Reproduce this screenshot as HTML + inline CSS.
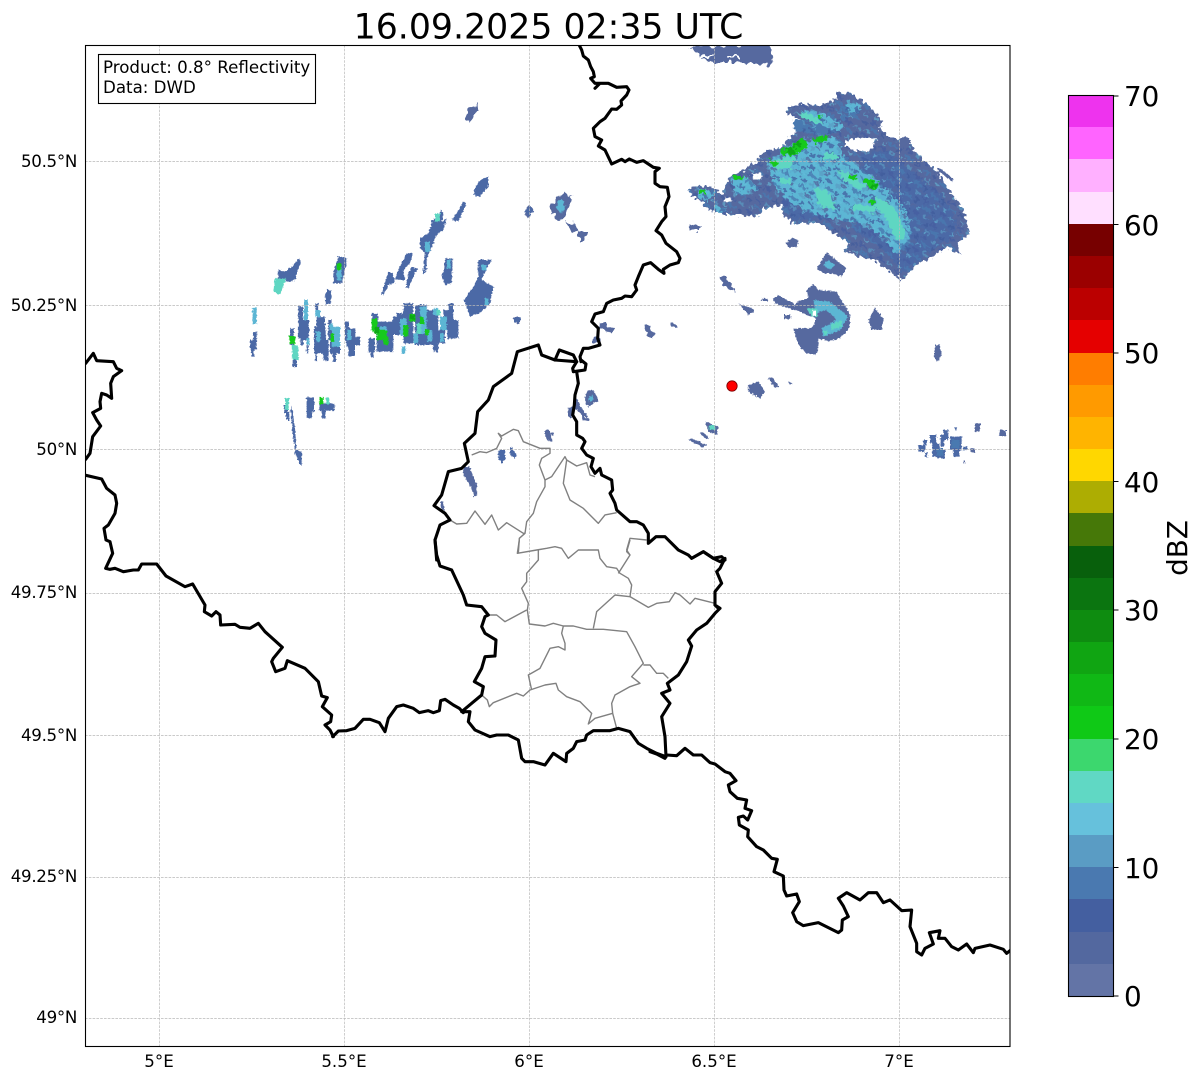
<!DOCTYPE html>
<html><head><meta charset="utf-8"><title>Radar</title>
<style>
html,body{margin:0;padding:0;background:#fff}
svg{display:block}
text{font-family:"DejaVu Sans",sans-serif;fill:#000}
.b{fill:none;stroke:#000;stroke-width:3.1;stroke-linejoin:round;stroke-linecap:round;vector-effect:non-scaling-stroke}
.g{fill:none;stroke:#808080;stroke-width:1.4;stroke-linejoin:round;vector-effect:non-scaling-stroke}
.gr{stroke:#b9b9b9;stroke-width:.7;stroke-dasharray:2.6 1.2;fill:none}
.t{font-size:16.67px}
.y{font-size:16.67px;letter-spacing:-.32px}
.c{font-size:27.78px}
.bl{fill:#4c69a6}.bm{fill:#4a79b0}.cy{fill:#5cb6d4}.te{fill:#5fd6c2}.gn{fill:#14c91c}.dg{fill:#0da815}.s{fill:#56699f}
</style></head>
<body>
<svg width="1202" height="1081" viewBox="0 0 1202 1081" xmlns="http://www.w3.org/2000/svg">
<defs>
<clipPath id="ax"><rect x="85.5" y="45.5" width="924.5" height="1001"/></clipPath>
<filter id="rough" x="-5%" y="-5%" width="110%" height="110%" primitiveUnits="userSpaceOnUse">
<feTurbulence type="fractalNoise" baseFrequency="0.11" numOctaves="1" seed="4" result="n"/>
<feDisplacementMap in="SourceGraphic" in2="n" scale="26" xChannelSelector="R" yChannelSelector="G"/>
</filter>
<filter id="rough2" x="-5%" y="-5%" width="110%" height="110%" primitiveUnits="userSpaceOnUse">
<feTurbulence type="fractalNoise" baseFrequency="0.18" numOctaves="1" seed="9" result="n"/>
<feDisplacementMap in="SourceGraphic" in2="n" scale="11" xChannelSelector="R" yChannelSelector="G"/>
</filter>
<pattern id="sp" width="66" height="44" patternUnits="userSpaceOnUse" patternTransform="rotate(38)">
<rect x="0" y="4" width="24" height="9" fill="#445fa0" opacity=".75"/>
<rect x="34" y="0" width="18" height="8" fill="#5a9cc4" opacity=".7"/>
<rect x="12" y="22" width="30" height="8" fill="#4a79b0" opacity=".8"/>
<rect x="48" y="18" width="14" height="10" fill="#3f5a9c" opacity=".7"/>
<rect x="2" y="34" width="12" height="7" fill="#66c1dc" opacity=".55"/>
<rect x="44" y="35" width="20" height="7" fill="#53689f" opacity=".8"/>
</pattern>
</defs>
<rect width="1202" height="1081" fill="#fff"/>

<g clip-path="url(#ax)">
<!-- radar: main storm -->
<g transform="translate(680 80) scale(.33333)">
<g filter="url(#rough)">
<path class="s" d="M20 328L60 318 100 322 125 345 130 325 150 290 190 270 230 245 240 225 260 212 300 205 320 180 350 155 375 140 355 115 320 100 325 80 360 72 420 75 450 65 470 55 465 35 510 40 550 65 590 100 605 125 600 150 630 170 690 195 725 235 770 275 815 340 845 380 870 460 830 490 840 525 800 500 760 530 720 545 695 570 665 600 630 575 585 540 530 530 490 510 510 490 470 465 420 430 340 430 305 400 310 375 250 385 235 410 160 405 120 400 70 380 70 370 35 345Z"/>
<path fill="#fff" d="M500 180L540 172 590 180 565 215 520 210 495 195ZM215 280h30v16h-30ZM135 352h20v14h-20Z"/>
<path class="bl" d="M540 220L620 210 700 280 780 340 830 420 820 470 740 520 670 580 600 500 520 450 560 380ZM300 340L400 350 440 420 340 420 310 380Z"/>
<path class="bm" d="M340 120h90l60 30 -60 20 -90 -20ZM470 90l50 -30 20 40 -50 20ZM620 450l40 -30 40 70 -40 30Z"/>
<path class="cy" d="M360 90L420 95 490 130 480 155 420 135 375 110ZM500 60l30 5 15 25 -40 10ZM60 325l45 15 -20 25 -35 -15ZM110 375l30 15 -15 10 -25 -10ZM150 300l45 -10 45 35 -40 15 -30 5Z"/>
<path class="cy" d="M260 250L340 190 470 170 490 225 590 300 680 390 695 460 650 525 610 470 540 430 480 420 400 400 350 380 290 330Z"/>
<path fill="url(#sp)" d="M20 328L60 318 100 322 125 345 130 325 150 290 190 270 230 245 240 225 260 212 300 205 320 180 350 155 375 140 355 115 320 100 325 80 360 72 420 75 450 65 470 55 465 35 510 40 550 65 590 100 605 125 600 150 630 170 690 195 725 235 770 275 815 340 845 380 870 460 830 490 840 525 800 500 760 530 720 545 695 570 665 600 630 575 585 540 530 530 490 510 510 490 470 465 420 430 340 430 305 400 310 375 250 385 235 410 160 405 120 400 70 380 70 370 35 345ZM500 180L495 195 520 210 565 215 590 180 540 172Z" fill-rule="evenodd"/>
<path class="te" d="M270 250l50 -20 30 0 -20 35 -40 5ZM470 270l30 5 60 45 -20 10 -50 -30ZM590 350l50 30 30 60 10 30 -30 10 -30 -60 -30 -40ZM400 320l40 10 30 60 -50 -10ZM520 370l60 10 20 -20 -20 40 -60 -10ZM300 295h30v20h-30ZM350 100h40l40 30 -40 -5ZM430 220h40v18h-40Z"/>
<path class="gn" d="M305 205h35v-15l30 -15 15 20 -25 20 -25 10h-30ZM265 235l30 15 -5 12 -25 -12ZM395 175l45 -10 5 15 -40 12ZM505 285l25 5 -5 12 -20 -8ZM550 295l25 0 25 25 -20 10 -25 -20ZM155 288h40l-10 10h-25ZM570 355l15 5 -5 15 -12 -8ZM415 105l15 5 -15 5ZM60 330h15v10h-15Z"/>
<path class="dg" d="M320 205h25v15h-25ZM345 185h20v15h-20ZM575 310h18v14h-18Z"/>
</g>
<g filter="url(#rough2)">
<path class="s" d="M316 490l20 -18 20 10 -6 18 -22 3ZM410 565l20 -30 10 -18 30 25 30 22 -15 25 -30 -8 -25 -2ZM28 436h18v12h-18ZM118 595l12 -8 30 40 -14 0ZM740 258l8 -2 8 10 -6 2ZM770 262l10 2 40 34 -4 6 -40 -30ZM658 178l20 -10 16 18 -18 20 -16 -14Z"/>
<path class="cy" d="M430 555l15 -15 20 15 -15 15Z"/>
</g>
</g>
<!-- radar: top and scattered north -->
<g filter="url(#rough2)">
<path class="s" d="M690 47L770 45 773 60 766 66 745 62 712 62 700 56ZM465 113l13 -9 1 6 -11 13ZM525 209l7 -3 2 7 -7 4ZM550 206l14 -14 9 4 -7 18 -6 6 -8 -6ZM565 222l6 0 7 8 -6 3ZM578 231l9 0 1 8 -8 1ZM691 225h9v6h-9ZM720 277l6 0 8 14 -8 -4Z"/>
<path fill="#fff" d="M700 55h12v2h-12ZM726 56h14v2h-14Z"/>
<path class="cy" d="M556 204l7 -6 3 8 -6 6Z"/>
<path class="s" d="M598 323l8 -1 3 3 -2 6 -7 -1ZM605 326l9 2 -1 5 -9 -2ZM593 337h8v6h-8ZM645 327l5 -2 6 10 -3 3 -5 -3ZM670 322l5 0 3 6 -5 1ZM585 392l7 -3 5 12 -6 5 -6 -3ZM568 408h6v8h-6ZM576 406l5 2 7 12 -4 1Z"/>
<path class="s" d="M513 317l6 1 1 4 -6 -1Z"/>
</g>
<!-- west clusters -->
<g transform="translate(240 170) scale(.33333)">
<g filter="url(#rough2)">
<path class="bl" d="M30 510h20v28h-20ZM34 538h9v22h-9ZM40 485h10v25h-10ZM150 475h12v50h-12ZM158 565h13v25h-13ZM175 410h14v95h-14ZM185 450h22v60h-22ZM182 505h8v20h-8ZM200 510h5v40h-5ZM222 470h35v80h-35ZM226 400h10v30h-10ZM230 440h25v40h-25ZM225 548h6v24h-6ZM250 510h15v62h-15ZM265 450h10v60h-10ZM258 520h8v52h-8ZM270 480h30v70h-30ZM278 545h10v30h-10ZM315 455h12v60h-12ZM318 475h28v55h-28ZM325 530h20v28h-20ZM345 500h15v25h-15ZM385 505h20v42h-20ZM392 545h9v18h-9ZM395 430h20v30h-20ZM410 455h50v90h-50ZM458 440h26v55h-26ZM490 400h30v120h-30ZM525 405h35v120h-35ZM555 420h40v105h-40ZM580 480h15v65h-15ZM595 480h20v40h-20ZM610 420h30v60h-30ZM622 450h33v55h-33ZM625 400h15v30h-15ZM470 430h30v50h-30Z"/>
<path class="bl" d="M178 265l4 10 -17 55 -20 5 -30 -5v-32l20 7 20 -15ZM295 258l27 7 -17 75 -25 0v-30ZM262 358l13 4 -3 38 -14 5 -3 -25ZM575 155l30 -35 5 10 -5 25 15 -10 -10 35 -20 15 -20 50 -10 20v35l-12 15 7 -65 -15 -15v-30l25 -15 10 -30ZM500 250l18 -2 -8 32 -20 20 5 30h-30l5 -20ZM445 305l13 5 7 30 -20 5 -15 30 -5 -5ZM515 292l20 3 -15 25 -15 35 -7 -5 7 -40ZM615 265l23 0 -3 75 -20 5 -10 -30 7 -10ZM715 270h40l-20 35 -10 25 35 20 -10 50 -25 25 -10 5 -25 10 -18 -50 28 -40 15 -30ZM705 55l15 -25 25 -10v30l-25 30 -20 -5ZM670 95l10 5 -25 55 -18 -5ZM868 108l14 14 -14 16 -15 -13ZM822 442h18v15h-18ZM155 705l10 70 5 65 15 5 2 40h-7l-15 -35 -7 -60 -6 -70ZM200 682h22v45h-6v18h-16ZM238 700h45v22h-45ZM245 720h12v25h-12ZM132 705h12v25h-12ZM138 725h10v25h-10ZM775 840h20v30h-5v10h-7v-10h-8ZM810 830l5 0 15 25 -5 10 -15 -10Z"/>
<path class="cy" d="M38 412h12v50h-12ZM192 390h12v60h-12ZM226 420h14v20h-14ZM228 485h14v30h-14ZM200 505h8v20h-8ZM268 460h12v20h-12ZM322 480h12v30h-12ZM420 470h20v20h-20ZM480 445h20v50h-20ZM540 410h20v80h-20ZM290 290h15v40h-15ZM600 440h20v40h-20ZM600 490h12v25h-12ZM580 415h15v20h-15ZM620 270h12v25h-12ZM555 215h15v30h-15ZM275 470h25v60h-25ZM562 480h15v35h-15ZM520 490h15v30h-15ZM485 530h12v22h-12ZM725 285h15v15h-15ZM735 385h10v20h-10Z"/>
<path class="te" d="M105 325h35l-10 20 -10 30 -20 -10ZM155 525h20v45h-18ZM135 685h12v35h-12ZM258 682h10v20h-10ZM585 130h15v25h-15ZM590 418h10v18h-10ZM530 460h14v30h-14Z"/>
<path class="gn" d="M148 498h18v24h-18ZM290 280h14v20h-14ZM395 445h18v40h-18ZM410 480h30v30h-30ZM430 500h15v25h-15ZM490 465h15v35h-15ZM508 432h18v22h-18ZM540 440h12v22h-12ZM555 478h12v18h-12ZM238 682h12v20h-12ZM272 490h10v25h-10Z"/>
<path class="dg" d="M403 470h15v20h-15ZM510 435h14v14h-14Z"/>
</g>
</g>
<!-- near Luxembourg and east -->
<g transform="translate(430 340) scale(.33333)">
<g filter="url(#rough2)">
<path class="s" d="M345 270h12l8 25 -8 8 -12 -12ZM362 278h8v8h-8ZM360 295h7v10h-7ZM100 380l18 0 22 55 0 35 -8 0 -10 -30 -22 -35ZM30 485l10 0 5 30 -12 -12ZM412 205l20 -5 8 -25 12 25 22 30 -4 4 -20 -15 -12 -12 -8 8ZM465 170l20 -20 12 10 4 20 -22 20 -12 -8Z"/>
<path class="cy" d="M475 175l12 -10 5 12 -12 12Z"/>
</g>
</g>
<g transform="translate(680 270) scale(.33333)">
<g filter="url(#rough2)">
<path class="s" d="M380 60l20 -18 15 18 55 5 20 35 20 30v40l-15 20 -25 20 -30 2 -25 -7v30l-10 20 -25 -5 -25 -25 -15 -50h55l15 -30 -30 -10 -40 -20 10 -20 35 -10ZM280 85l15 -10 45 25 5 20 -35 -10 -25 -10ZM245 85h18v8h-18ZM175 100l40 15 10 10 -20 10 -15 -20ZM120 20l25 15 15 27 -25 -17ZM312 135h20v12h-20ZM565 150l20 -35 25 30 -5 35h-30ZM765 225h15l5 25 -10 25 -13 -10ZM205 345l30 -10 20 30 -15 20 -35 -20ZM265 325l10 -3 23 28 -13 5ZM325 335l13 5 -8 5ZM75 455l40 15 -5 25 -25 -10ZM58 490l7 -5 23 17 -8 6ZM25 510l10 -5 45 20 -10 8ZM885 460h15v25h-15ZM958 480h20v18h-20ZM870 535h15v12h-15ZM850 570h5v8h-5Z"/>
<path class="bl" d="M715 525h20v20h-20ZM730 510h10v15h-10ZM750 495h20v25h-20ZM757 520h22v40h-22ZM770 540h25v25h-25ZM790 480h15v30h-15ZM782 495h10v35h-10ZM810 500h35v40h-35ZM820 540h18v20h-18ZM850 530h12v12h-12ZM735 548h8v14h-8ZM825 472h6v10h-6Z"/>
<path class="bm" d="M770 535h20v22h-20ZM815 510h24v24h-24Z"/>
<path class="cy" d="M400 90l50 5 55 45 -25 40 -50 20 -5 -25 45 -25 -30 -30 -30 10Z"/>
<path class="te" d="M380 115l30 0 5 25 -20 0ZM450 165l35 -15 0 20 -30 10ZM430 180l15 5 -10 15ZM88 465h18v15h-18Z"/>
<path fill="#fff" d="M398 122h10v15h-10Z"/>
</g>
</g>
<!-- gridlines -->
<path class="gr" d="M159.5 45V1047M344.5 45V1047M529.5 45V1047M714.5 45V1047M899.5 45V1047M85 161.5H1010M85 305.5H1010M85 449.5H1010M85 593.5H1010M85 735.500H1010M85 877.5H1010M85 1018.5H1010"/>
<!-- gray admin lines -->
<g transform="translate(430 340) scale(.33333)">
<path class="g" d="M125 345L150 335 170 338 200 325 215 295 205 280 215 288 250 268 265 272 280 305 330 325 360 325 360 340 335 355 328 375 345 420 345 440 320 485 310 520 290 545 285 580"/>
<path class="g" d="M60 540L80 552 110 550 135 513 165 553 185 525 205 570 230 548 280 580 285 580 268 595 265 640"/>
<path class="g" d="M345 420L365 410 405 350 410 360 400 430 420 480 460 505 505 550 525 525 560 518"/>
<path class="g" d="M410 360L440 378 470 368 480 405 495 410"/>
<path class="g" d="M650 600L600 595 590 630 600 645"/>
</g>
<g transform="translate(430 540) scale(.33333)">
<path class="g" d="M268 0L262 40 320 30 350 25 375 20 395 25 415 55 445 30 505 30 510 55 530 80 560 85 570 100 595 115 605 135 600 170 655 202 680 190 718 185 735 158 750 165 780 192 795 175 855 190"/>
<path class="g" d="M600 0L590 35 600 45 565 100"/>
<path class="g" d="M325 30L325 60 290 100 290 125 275 145 295 190 292 210 298 252 345 258 370 250 400 258 430 258 470 268 520 268 590 275 615 320 640 370 605 410 630 430 600 440 555 465 545 490 548 520 560 565"/>
<path class="g" d="M600 170L555 165 500 215 490 265"/>
<path class="g" d="M400 258L395 280 405 310 405 330 385 320 360 325 330 385 295 405 305 450"/>
<path class="g" d="M175 225L200 225 225 245 290 210"/>
<path class="g" d="M155 465L172 480 178 500 190 488 260 460 280 468 300 450 345 435 378 430 385 450 410 470 450 485 485 520 475 552 495 535 548 520"/>
<path class="g" d="M640 375L660 375 680 400 700 400 715 415"/>
</g>
<!-- thick borders -->
<g transform="translate(560 40) scale(.33333)">
<path class="b" d="M55 10L65 30 70 48 85 60 92 80 100 95 103 110 92 115 105 130 120 130 105 145 120 130 145 130 170 142 200 140 207 150 200 165 183 183 185 195 170 208 155 207 135 235 120 245 100 265 105 290 125 300 115 318 135 330 155 372 185 358 195 365 208 357 230 367 250 362 280 382 298 385 285 395 285 430 300 440 322 442 327 470 315 500 318 530 305 545 288 572 305 585 318 610 350 635 360 655 355 668 330 675 310 688 312 700 295 688 272 668 250 675 235 710 225 735 230 750 215 770 195 768 185 775 160 780 140 790 130 815 105 822 95 845 115 865 113 895 120 915 85 925 70 925 60 950 63 965"/>
</g>
<g transform="translate(430 340) scale(.33333)">
<path class="b" d="M453 60L468 72 465 90 430 95 428 85 440 65 375 60"/>
<path class="b" d="M440 95L445 130 435 165 433 195 428 225 440 245 440 285 458 295 465 305 455 325 470 345 490 355 483 380 495 400 510 385 515 405 545 420 548 450 540 460 555 490 560 510 600 545 620 545 640 555 655 580 655 610 678 590 705 590 745 630 775 645 785 655 820 635 850 655 875 650 885 660"/>
<path class="b" d="M20 660L15 600 30 555 60 540 45 520 12 497 35 465 55 395 95 385 115 365 103 310 135 280 143 215 175 180 190 140 245 100 262 35 325 15 335 45 375 60 388 30 430 45 440 65"/>
</g>
<g transform="translate(430 540) scale(.33333)">
<path class="b" d="M785 55L820 35 850 55 870 65 885 55 870 85 860 95 875 130 855 155 855 195 870 205 855 220 830 250 800 270 775 300 785 318 770 365 745 405 712 430 720 450 695 460 720 490 695 530 705 590 708 650 680 640 650 625 625 610 600 575 565 565 540 572 490 572 470 585 465 600 440 605 430 625 410 640 408 665 370 640 345 675 310 665 285 665 275 655 265 600 235 585 200 585 180 590 135 570 115 545 120 515 95 515 125 490 155 465 160 440 133 425 155 385 165 350 195 348 198 300 165 280 155 260 165 230 175 225 155 200 110 195 100 165 65 90 30 78 20 45 15 0"/>
<path class="b" d="M855 195l8 8"/>
</g>
<g transform="translate(80 340) scale(.33333)">
<path class="b" d="M5 80L17 70 40 40 50 62 100 65 110 85 125 92 100 110 92 130 95 175 80 165 65 160 60 185 62 205 38 218 50 240 62 258 38 290 30 340 17 358 5 365"/>
<path class="b" d="M5 403L65 417 80 445 105 465 110 490 105 520 85 555 72 565 78 600 90 605 98 640 77 685 90 688 105 685 130 695 160 690 175 690 185 672 230 672 258 708 315 740 338 732 375 795 373 815 395 828 408 815 420 825 422 855 465 853 480 862 510 865 535 850 555 875 607 922 580 955 575 965 587 995 615 985 622 962 675 985 715 1025 725 1068 742 1073 727 1100 755 1125 752 1145 735 1155 750 1170 760 1190"/>
</g>
<g transform="translate(320 680) scale(.33333)">
<path class="b" d="M38 170L55 153 80 152 105 145 130 118 150 118 178 128 195 155 205 115 230 80 250 75 280 85 298 98 325 92 340 98 358 92 362 62 375 58 400 75 418 85 430 98"/>
</g>
<g transform="translate(650 740) scale(.33333)">
<path class="b" d="M0 35L20 42 45 55 50 45 80 47 105 25 130 45 155 45 180 68 195 72 225 95 240 100 258 122 235 135 240 155 262 175 290 180 285 205 305 212 293 240 280 228 265 232 268 255 295 270 293 290 320 320 340 330 365 355 382 358 372 395 400 408 402 450 410 468 440 462 448 485 428 518 440 545 460 557 505 548 565 578 575 570 577 540 595 530 580 498 565 475 590 458 630 480 655 458 680 458 700 488 720 480 755 512 785 510 780 560 800 610 800 635 815 645 825 625 850 612 838 578 870 572 865 595 885 595 905 620 925 630 950 612 970 638 975 625 1020 615 1060 628 1070 640 1085 628"/>
</g>
<circle cx="732" cy="386" r="5.2" fill="#ff0000" stroke="#7a0000" stroke-width=".8"/>
</g>

<!-- info box -->
<rect x="98.5" y="54.5" width="217" height="49" fill="#fff" stroke="#000" stroke-width="1.1"/>
<text class="t" x="103" y="73">Product: 0.8° Reflectivity</text>
<text class="t" x="103" y="93">Data: DWD</text>

<!-- axes frame -->
<rect x="85.5" y="45.5" width="924.5" height="1001" fill="none" stroke="#000" stroke-width="1.1"/>

<!-- title -->
<text x="548.500" y="38.500" font-size="34.72" text-anchor="middle">16.09.2025 02:35 UTC</text>

<!-- tick labels -->
<g text-anchor="middle">
<text class="t" x="159" y="1067">5°E</text>
<text class="t" x="344" y="1067">5.5°E</text>
<text class="t" x="529" y="1067">6°E</text>
<text class="t" x="714" y="1067">6.5°E</text>
<text class="t" x="899" y="1067">7°E</text>
</g>
<g text-anchor="end">
<text class="y" x="77" y="167">50.5°N</text>
<text class="y" x="77" y="311">50.25°N</text>
<text class="y" x="77" y="455">50°N</text>
<text class="y" x="77" y="598">49.75°N</text>
<text class="y" x="77" y="741">49.5°N</text>
<text class="y" x="77" y="882">49.25°N</text>
<text class="y" x="77" y="1023">49°N</text>
</g>

<!-- colorbar -->
<g shape-rendering="crispEdges">
<rect x="1068" y="96" width="45" height="32" fill="#ee33ee"/>
<rect x="1068" y="127" width="45" height="33" fill="#ff64ff"/>
<rect x="1068" y="159" width="45" height="33" fill="#ffb0ff"/>
<rect x="1068" y="192" width="45" height="32" fill="#ffdfff"/>
<rect x="1068" y="224" width="45" height="32" fill="#770000"/>
<rect x="1068" y="256" width="45" height="32" fill="#9b0000"/>
<rect x="1068" y="288" width="45" height="32" fill="#bb0000"/>
<rect x="1068" y="320" width="45" height="33" fill="#e50000"/>
<rect x="1068" y="353" width="45" height="32" fill="#ff7d00"/>
<rect x="1068" y="385" width="45" height="32" fill="#ff9a00"/>
<rect x="1068" y="417" width="45" height="32" fill="#ffb400"/>
<rect x="1068" y="449" width="45" height="32" fill="#ffd700"/>
<rect x="1068" y="481" width="45" height="32" fill="#adad02"/>
<rect x="1068" y="513" width="45" height="33" fill="#467808"/>
<rect x="1068" y="546" width="45" height="32" fill="#08600c"/>
<rect x="1068" y="578" width="45" height="32" fill="#0b7510"/>
<rect x="1068" y="610" width="45" height="32" fill="#0e8c10"/>
<rect x="1068" y="642" width="45" height="32" fill="#10a512"/>
<rect x="1068" y="674" width="45" height="32" fill="#10b815"/>
<rect x="1068" y="706" width="45" height="33" fill="#0fc916"/>
<rect x="1068" y="739" width="45" height="32" fill="#3cd76e"/>
<rect x="1068" y="771" width="45" height="32" fill="#60d8c4"/>
<rect x="1068" y="803" width="45" height="32" fill="#66c1dc"/>
<rect x="1068" y="835" width="45" height="32" fill="#5a9cc4"/>
<rect x="1068" y="867" width="45" height="32" fill="#4a79b0"/>
<rect x="1068" y="899" width="45" height="33" fill="#445fa0"/>
<rect x="1068" y="932" width="45" height="32" fill="#53689f"/>
<rect x="1068" y="964" width="45" height="32" fill="#6374a6"/>
</g>
<rect x="1068.5" y="95.5" width="45" height="901" fill="none" stroke="#000" stroke-width="1.1"/>
<path d="M1113.5 96h5M1113.5 224.500h5M1113.500 353h5M1113.500 481.500h5M1113.500 610h5M1113.500 739h5M1113.500 867.500h5M1113.500 996h5" stroke="#000" stroke-width="1.1" fill="none"/>
<text class="c" x="1124" y="106">70</text>
<text class="c" x="1124" y="235">60</text>
<text class="c" x="1124" y="363">50</text>
<text class="c" x="1124" y="492">40</text>
<text class="c" x="1124" y="620">30</text>
<text class="c" x="1124" y="749">20</text>
<text class="c" x="1124" y="878">10</text>
<text class="c" x="1124" y="1006">0</text>
<text class="c" transform="translate(1187 548) rotate(-90)" text-anchor="middle">dBZ</text>
</svg>
</body></html>
